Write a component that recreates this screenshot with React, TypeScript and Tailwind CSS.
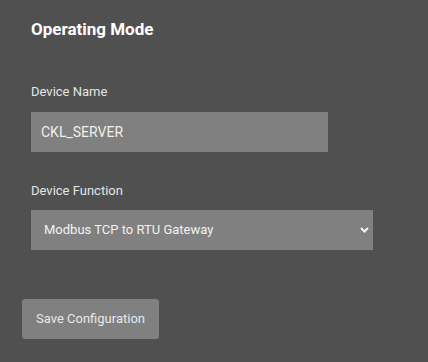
import React from "react";

export default function App() {
  return (
    <div className="min-h-screen w-full bg-[#505050] px-[22px] pt-[19px] font-['Roboto',_'Liberation_Sans',_Arial,_sans-serif]">
      <div className="px-[9px]">
        <h2 className="text-[17px] leading-[20px] font-bold text-white">Operating Mode</h2>

        <div className="mt-[45px]">
          <label className="block text-[13px] leading-[16px] text-[#e4e4e4]">Device Name</label>
          <input
            defaultValue="CKL_SERVER"
            className="mt-[12px] block h-[40px] w-[297px] bg-[#808080] px-[10px] text-[14px] text-[#efefef] outline-none"
          />
        </div>

        <div className="mt-[31px]">
          <label className="block text-[13px] leading-[16px] text-[#e4e4e4]">Device Function</label>
          <div className="relative mt-[11px] w-[342px]">
            <select
              defaultValue="gw"
              className="block h-[40px] w-full appearance-none bg-[#808080] pl-[13px] text-[13px] font-normal text-[#f2f2f2] outline-none"
            >
              <option value="gw">Modbus TCP to RTU Gateway</option>
            </select>
            <svg
              className="pointer-events-none absolute right-[4px] top-[17px]"
              width="9"
              height="6"
              viewBox="0 0 9 6"
              fill="none"
            >
              <path d="M1 1L4.5 4.5L8 1" stroke="#f4f4f4" strokeWidth="2" />
            </svg>
          </div>
        </div>
      </div>

      <button className="mt-[49px] h-[40px] rounded-[3px] bg-[#808080] px-[14px] text-[13px] text-[#e8e8e8]">
        Save Configuration
      </button>
    </div>
  );
}
